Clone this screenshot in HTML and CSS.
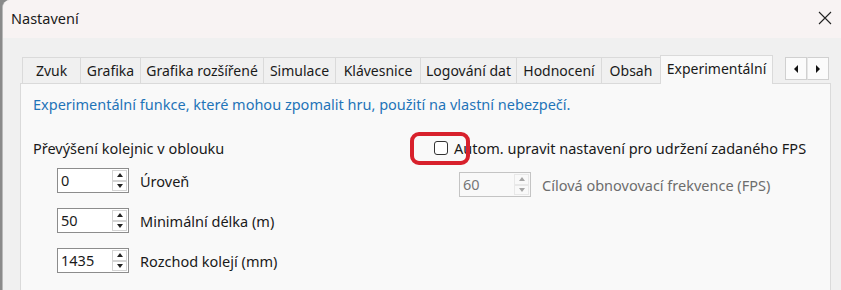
FILE: index.html
```html
<!DOCTYPE html>
<html lang="cs">
<head>
    <meta charset="UTF-8">
    <title>Nastavení</title>
    <link rel="stylesheet" href="styles.css">
</head>
<body>
    <div class="window">
        <div class="titleBar">
            <span class="title">Nastavení</span>
            <svg class="closeIcon" width="14" height="14" viewBox="0 0 14 14">
                <path d="M1 1 L13 13 M13 1 L1 13" stroke="#222" stroke-width="1.1" fill="none"/>
            </svg>
        </div>

        <div class="dialogBody">
            <div class="tabStrip">
                <div class="tab" style="width:58px">Zvuk</div>
                <div class="tab" style="width:60px">Grafika</div>
                <div class="tab" style="width:123px">Grafika rozšířené</div>
                <div class="tab" style="width:72px">Simulace</div>
                <div class="tab" style="width:85px">Klávesnice</div>
                <div class="tab" style="width:96px">Logování dat</div>
                <div class="tab" style="width:85px">Hodnocení</div>
                <div class="tab" style="width:59px">Obsah</div>
                <div class="tab selectedTab" style="width:113px">Experimentální</div>
                <div class="tabScroll">
                    <span class="scrollBtn"><span class="arrowLeft"></span></span>
                    <span class="scrollBtn"><span class="arrowRight"></span></span>
                </div>
            </div>

            <div class="tabPanel">
                <div class="warning">Experimentální funkce, které mohou zpomalit hru, použití na vlastní nebezpečí.</div>

                <div class="columns">
                    <div class="leftColumn">
                        <div class="groupLabel">Převýšení kolejnic v oblouku</div>
                        <div class="spinRow">
                            <div class="spinBox"><span class="spinValue">0</span><span class="spinButtons"><span class="spinUp"></span><span class="spinDown"></span></span></div>
                            <span class="spinLabel">Úroveň</span>
                        </div>
                        <div class="spinRow">
                            <div class="spinBox"><span class="spinValue">50</span><span class="spinButtons"><span class="spinUp"></span><span class="spinDown"></span></span></div>
                            <span class="spinLabel">Minimální délka (m)</span>
                        </div>
                        <div class="spinRow">
                            <div class="spinBox"><span class="spinValue">1435</span><span class="spinButtons"><span class="spinUp"></span><span class="spinDown"></span></span></div>
                            <span class="spinLabel">Rozchod kolejí (mm)</span>
                        </div>
                    </div>

                    <div class="rightColumn">
                        <label class="checkRow">
                            <span class="checkBox"></span>
                            <span>Autom. upravit nastavení pro udržení zadaného FPS</span>
                        </label>
                        <div class="spinRow disabledRow">
                            <div class="spinBox"><span class="spinValue">60</span><span class="spinButtons"><span class="spinUp"></span><span class="spinDown"></span></span></div>
                            <span class="spinLabel">Cílová obnovovací frekvence (FPS)</span>
                        </div>
                    </div>
                </div>

                <!-- red marker drawn over the checkbox -->
                <div class="highlightMark"></div>
            </div>
        </div>
    </div>
</body>
</html>
```

FILE: styles.css
```css
/* Settings dialog */
body {
  margin: 0;
  padding: 0;
  width: 841px;
  height: 290px;
  overflow: hidden;
  background-color: #8a8a8a;
  font-family: "Noto Sans", "Open Sans", sans-serif;
  font-size: 14.5px;
  color: #1a1a1a;
}

.window {
  margin-left: 2px;
  height: 300px;
  background-color: #f0f0f0;
  border-left: 1px solid #b9b9b9;
  border-top-left-radius: 8px;
  overflow: hidden;
}

.titleBar {
  height: 38px;
  display: flex;
  align-items: center;
  justify-content: space-between;
  padding: 0 9px 0 8px;
  background-color: #f8f3f3;
}

.title {
  margin-top: -2px;
}

.closeIcon {
  margin-top: -3px;
}

.dialogBody {
  padding: 17px 10px 0 17px;
}

.tabStrip {
  display: flex;
  align-items: flex-end;
  height: 28px;
  padding-left: 2px;
  position: relative;
}

.tab {
  box-sizing: border-box;
  height: 26px;
  border: 1px solid #dadada;
  border-bottom: none;
  border-right: none;
  font-size: 14px;
  display: flex;
  align-items: center;
  justify-content: center;
  white-space: nowrap;
  overflow: hidden;
  background-color: #f0f0f0;
}

.selectedTab {
  height: 29px;
  margin-bottom: -1px;
  border-right: 1px solid #dadada;
  background-color: #f9f9f9;
  padding-bottom: 3px;
  position: relative;
  z-index: 1;
}

.tabScroll {
  display: flex;
  margin-left: 12px;
  margin-bottom: 3px;
}

.scrollBtn {
  box-sizing: border-box;
  width: 22px;
  height: 23px;
  border: 1px solid #d0d0d0;
  background-color: #fbfbfb;
  display: flex;
  align-items: center;
  justify-content: center;
}

.scrollBtn + .scrollBtn {
  border-left: 1px solid #e6e6e6;
}

.arrowLeft {
  width: 0;
  height: 0;
  border-top: 4px solid transparent;
  border-bottom: 4px solid transparent;
  border-right: 4px solid #111;
}

.arrowRight {
  width: 0;
  height: 0;
  border-top: 4px solid transparent;
  border-bottom: 4px solid transparent;
  border-left: 4px solid #111;
}

.tabPanel {
  box-sizing: border-box;
  height: 260px;
  width: 811px;
  background-color: #f9f9f9;
  border: 1px solid #dadada;
  padding: 10px 12px 0 12px;
  position: relative;
}

.warning {
  color: #1f74b8;
  line-height: 20px;
}

.columns {
  display: flex;
  margin-top: 24px;
}

.leftColumn {
  width: 401px;
}

.groupLabel {
  line-height: 20px;
  margin-bottom: 10px;
}

.spinRow {
  display: flex;
  align-items: center;
  gap: 11px;
  margin-left: 24px;
  margin-bottom: 15px;
}

.spinBox {
  box-sizing: border-box;
  width: 72px;
  height: 25px;
  border: 1px solid #8c8c8c;
  background-color: #fff;
  display: flex;
  justify-content: space-between;
  align-items: stretch;
}

.spinValue {
  padding-left: 3px;
  line-height: 23px;
}

.spinButtons {
  width: 15px;
  display: flex;
  flex-direction: column;
  margin: 1px 1px 1px 0;
}

.spinUp,
.spinDown {
  flex: 1;
  box-sizing: border-box;
  border: 1px solid #d4d4d4;
  display: flex;
  align-items: center;
  justify-content: center;
}

.spinUp::after {
  content: "";
  border-left: 3px solid transparent;
  border-right: 3px solid transparent;
  border-bottom: 4px solid #222;
}

.spinDown::after {
  content: "";
  border-left: 3px solid transparent;
  border-right: 3px solid transparent;
  border-top: 4px solid #222;
}

.checkRow {
  display: flex;
  align-items: center;
  gap: 6px;
  line-height: 20px;
  margin-bottom: 14px;
}

.checkBox {
  box-sizing: border-box;
  width: 14px;
  height: 14px;
  border: 1px solid #333;
  border-radius: 3px;
  background-color: #fff;
}

.disabledRow {
  margin-left: 25px;
}

.disabledRow .spinBox {
  border-color: #c4c4c4;
  background-color: #f9f9f9;
  color: #777;
}

.disabledRow .spinUp,
.disabledRow .spinDown {
  border-color: #e8e8e8;
}

.disabledRow .spinUp::after {
  border-bottom-color: #a5a5a5;
}

.disabledRow .spinDown::after {
  border-top-color: #a5a5a5;
}

.disabledRow .spinLabel {
  color: #6d6d6d;
}

.highlightMark {
  position: absolute;
  left: 389px;
  top: 48px;
  width: 60px;
  height: 33px;
  box-sizing: border-box;
  border: 4px solid #d8212c;
  border-radius: 9px;
}
```
